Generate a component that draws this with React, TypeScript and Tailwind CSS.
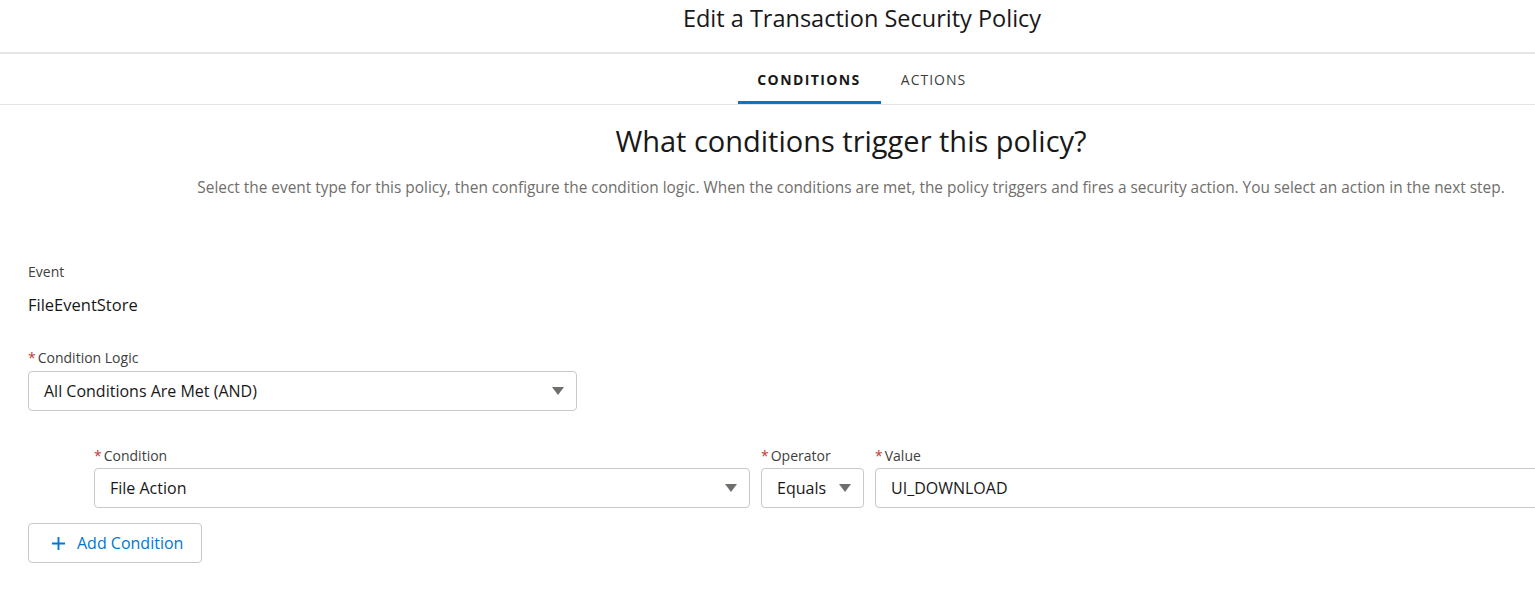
import React from 'react';

const font = { fontFamily: '"Open Sans", "Noto Sans", Arial, sans-serif' };

const Caret: React.FC = () => (
    <svg width="12" height="8" viewBox="0 0 12 8" className="shrink-0">
        <path d="M0 0 L12 0 L6 8 Z" fill="#706e6b" />
    </svg>
);

const Label: React.FC<{ text: string; required?: boolean }> = ({ text, required }) => (
    <div className="flex items-center h-[20px] text-[14px] text-[#3e3e3c]">
        {required && <span className="text-[#c23934] mr-[2px]">*</span>}
        {text}
    </div>
);

const Select: React.FC<{ value: string; className?: string }> = ({ value, className }) => (
    <div
        className={`flex items-center justify-between h-[40px] border border-[#c9c9c9] rounded-[4px] bg-white pl-[15px] pr-[12px] text-[16px] text-[#181818] ${className ?? ''}`}
    >
        <span>{value}</span>
        <Caret />
    </div>
);

const App: React.FC = () => {
    return (
        <div className="w-[1535px] h-[607px] overflow-hidden bg-white" style={font}>
            <div className="w-[1724px]">
                {/* Header */}
                <div className="h-[54px] flex justify-center pt-[3px] border-b-2 border-[#e5e5e5]">
                    <h1 className="text-[23.5px] leading-[30px] text-[#181818]">Edit a Transaction Security Policy</h1>
                </div>

                {/* Tabs */}
                <div className="flex justify-center border-b border-[#e5e5e5] h-[51px]">
                    <div className="flex">
                        <div className="w-[143px] pt-[3px] flex items-center justify-center border-b-[3px] border-[#0176d3] text-[14px] font-bold tracking-[1.4px] text-[#181818]">
                            CONDITIONS
                        </div>
                        <div className="w-[106px] pt-[3px] flex items-center justify-center border-b-[3px] border-transparent text-[14px] tracking-[1px] text-[#3e3e3c]">
                            ACTIONS
                        </div>
                    </div>
                </div>
            </div>

            {/* Content */}
            <div className="w-[1702px]">
                <h2 className="text-center text-[29px] text-[#181818] mt-[16px] leading-[40px]">
                    What conditions trigger this policy?
                </h2>
                <p className="text-center text-[15.4px] text-[#706e6b] mt-[15px]">
                    Select the event type for this policy, then configure the condition logic. When the conditions are met, the policy triggers and fires a security action. You select an action in the next step.
                </p>
            </div>

            <div className="pl-[28px] mt-[62px]">
                <Label text="Event" />
                <div className="text-[16.5px] text-[#181818] mt-[13px] leading-[22px]">FileEventStore</div>

                <div className="mt-[31px]">
                    <Label text="Condition Logic" required />
                    <Select value="All Conditions Are Met (AND)" className="w-[549px] mt-[4px]" />
                </div>

                <div className="flex mt-[34px] ml-[66px] gap-[11px]">
                    <div className="w-[656px] shrink-0">
                        <Label text="Condition" required />
                        <Select value="File Action" className="mt-[3px]" />
                    </div>
                    <div className="w-[103px] shrink-0">
                        <Label text="Operator" required />
                        <Select value="Equals" className="mt-[3px]" />
                    </div>
                    <div className="w-[800px] shrink-0">
                        <Label text="Value" required />
                        <div className="mt-[3px] h-[40px] border border-[#c9c9c9] rounded-[4px] flex items-center pl-[15px] text-[16px] text-[#181818]">
                            UI_DOWNLOAD
                        </div>
                    </div>
                </div>

                <button className="mt-[15px] h-[40px] w-[174px] border border-[#c9c9c9] rounded-[4px] flex items-center pl-[22px] gap-[11px] text-[16px] text-[#0176d3] bg-white">
                    <svg width="15" height="15" viewBox="0 0 16 16">
                        <path d="M8 1 V15 M1 8 H15" stroke="#0176d3" strokeWidth="2" />
                    </svg>
                    Add Condition
                </button>
            </div>
        </div>
    );
};

export default App;
